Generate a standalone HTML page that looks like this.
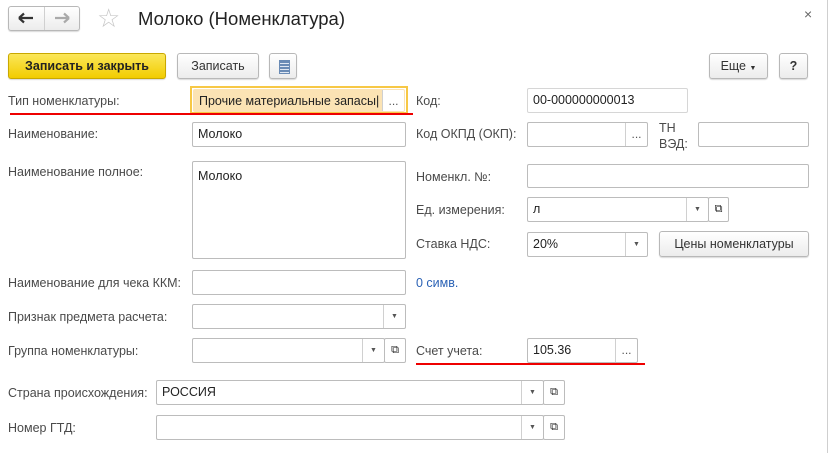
<!DOCTYPE html>
<html><head><meta charset="utf-8"><style>
body{margin:0;width:830px;height:453px;background:#fff;font-family:"Liberation Sans",Arial,sans-serif;font-size:12.5px;color:#333;position:relative;overflow:hidden}
.a{position:absolute}
.l{position:absolute;color:#4a4a4a;line-height:16px;white-space:nowrap}
.f{position:absolute;border:1px solid #bcbcbc;border-radius:2px;background:#fff;box-sizing:border-box;padding:0 5px;line-height:23px;color:#222;white-space:nowrap;overflow:hidden}
.d{position:absolute;top:0;bottom:0;width:21px;border-left:1px solid #d0d0d0;text-align:center;font-size:7px;color:#555;line-height:23px}
.btn{position:absolute;border:1px solid #b8b8b8;border-radius:3px;background:linear-gradient(#fff,#ececec);box-sizing:border-box;text-align:center;line-height:24px;color:#333;box-shadow:0 1px 1px rgba(0,0,0,.15)}
.red{position:absolute;height:2px;background:#e00}
</style></head><body>
<div class="a" style="right:2px;top:0;bottom:0;width:1px;background:#cfcfcf"></div>
<div class="btn" style="left:8px;top:6px;width:72px;height:25px"></div>
<div class="a" style="left:44px;top:7px;width:1px;height:23px;background:#d0d0d0"></div>
<svg class="a" style="left:18px;top:12px" width="16" height="12"><path d="M1 6H15M1 6L6 1.5M1 6L6 10.5" stroke="#333" stroke-width="2.2" fill="none"/></svg>
<svg class="a" style="left:54px;top:12px" width="16" height="12"><path d="M1 6H15M15 6L10 1.5M15 6L10 10.5" stroke="#aaa" stroke-width="2.2" fill="none"/></svg>
<div class="a" style="left:97px;top:3px;font-size:26px;color:#c8c8c8">☆</div>
<div class="a" style="left:138px;top:8px;font-size:18.5px;color:#222">Молоко (Номенклатура)</div>
<div class="a" style="left:804px;top:6px;font-size:14px;color:#666">×</div>
<div class="btn" style="left:8px;top:53px;width:158px;height:26px;background:linear-gradient(#fbe75a,#f2cc00);border-color:#c9a800;font-weight:bold;color:#222">Записать и закрыть</div>
<div class="btn" style="left:177px;top:53px;width:82px;height:26px">Записать</div>
<div class="btn" style="left:269px;top:53px;width:28px;height:26px"><div style="position:absolute;left:9px;top:6px;width:9px;height:12px;background:repeating-linear-gradient(#6a8bb5 0 2px,#dfe7f2 2px 3px);border:1px solid #6a8bb5"></div></div>
<div class="btn" style="left:709px;top:53px;width:59px;height:26px">Еще <span style="font-size:7px">▼</span></div>
<div class="btn" style="left:779px;top:53px;width:29px;height:26px;font-weight:bold">?</div>

<div class="l" style="left:8px;top:93px">Тип номенклатуры:</div>
<div class="a" style="left:190px;top:86px;width:218px;height:28px;border:2px solid #f7c845;box-sizing:border-box"></div>
<div class="f" style="left:193px;top:89px;width:212px;height:23px;background:#fbe3b4;border-color:#fbe3b4;line-height:22px">Прочие материальные запасы|<div class="d" style="right:0;background:#fff;font-size:12px;line-height:22px">...</div></div>
<div class="red" style="left:10px;top:113px;width:403px"></div>
<div class="l" style="left:416px;top:93px">Код:</div>
<div class="f" style="left:527px;top:88px;width:161px;height:25px;border-color:#d6d6d6">00-000000000013</div>

<div class="l" style="left:8px;top:126px">Наименование:</div>
<div class="f" style="left:192px;top:122px;width:214px;height:25px">Молоко</div>
<div class="l" style="left:416px;top:126px">Код ОКПД (ОКП):</div>
<div class="f" style="left:527px;top:122px;width:121px;height:25px"><div class="d" style="right:0;font-size:12px">...</div></div>
<div class="l" style="left:659px;top:120px;line-height:16px">ТН<br>ВЭД:</div>
<div class="f" style="left:698px;top:122px;width:111px;height:25px"></div>

<div class="l" style="left:8px;top:164px">Наименование полное:</div>
<div class="f" style="left:192px;top:161px;width:214px;height:98px;line-height:28px">Молоко</div>
<div class="l" style="left:416px;top:169px">Номенкл. №:</div>
<div class="f" style="left:527px;top:164px;width:282px;height:24px"></div>

<div class="l" style="left:416px;top:202px">Ед. измерения:</div>
<div class="f" style="left:527px;top:197px;width:182px;height:25px">л<div class="d" style="right:0">▼</div></div>
<div class="f" style="left:708px;top:197px;width:21px;height:25px;padding:0;text-align:center;font-size:11px">⧉</div>

<div class="l" style="left:416px;top:236px">Ставка НДС:</div>
<div class="f" style="left:527px;top:232px;width:121px;height:25px">20%<div class="d" style="right:0">▼</div></div>
<div class="btn" style="left:659px;top:231px;width:150px;height:26px">Цены номенклатуры</div>

<div class="l" style="left:8px;top:275px">Наименование для чека ККМ:</div>
<div class="f" style="left:192px;top:270px;width:214px;height:25px"></div>
<div class="l" style="left:416px;top:275px;color:#2b62b5">0 симв.</div>

<div class="l" style="left:8px;top:309px">Признак предмета расчета:</div>
<div class="f" style="left:192px;top:304px;width:214px;height:25px"><div class="d" style="right:0">▼</div></div>

<div class="l" style="left:8px;top:343px">Группа номенклатуры:</div>
<div class="f" style="left:192px;top:338px;width:193px;height:25px"><div class="d" style="right:0">▼</div></div>
<div class="f" style="left:384px;top:338px;width:22px;height:25px;padding:0;text-align:center;font-size:11px">⧉</div>
<div class="l" style="left:416px;top:343px">Счет учета:</div>
<div class="f" style="left:527px;top:338px;width:111px;height:25px">105.36<div class="d" style="right:0;font-size:12px">...</div></div>
<div class="red" style="left:416px;top:363px;width:229px"></div>

<div class="l" style="left:8px;top:385px">Страна происхождения:</div>
<div class="f" style="left:156px;top:380px;width:388px;height:25px">РОССИЯ<div class="d" style="right:0">▼</div></div>
<div class="f" style="left:543px;top:380px;width:22px;height:25px;padding:0;text-align:center;font-size:11px">⧉</div>

<div class="l" style="left:8px;top:420px">Номер ГТД:</div>
<div class="f" style="left:156px;top:415px;width:388px;height:25px"><div class="d" style="right:0">▼</div></div>
<div class="f" style="left:543px;top:415px;width:22px;height:25px;padding:0;text-align:center;font-size:11px">⧉</div>
</body></html>
